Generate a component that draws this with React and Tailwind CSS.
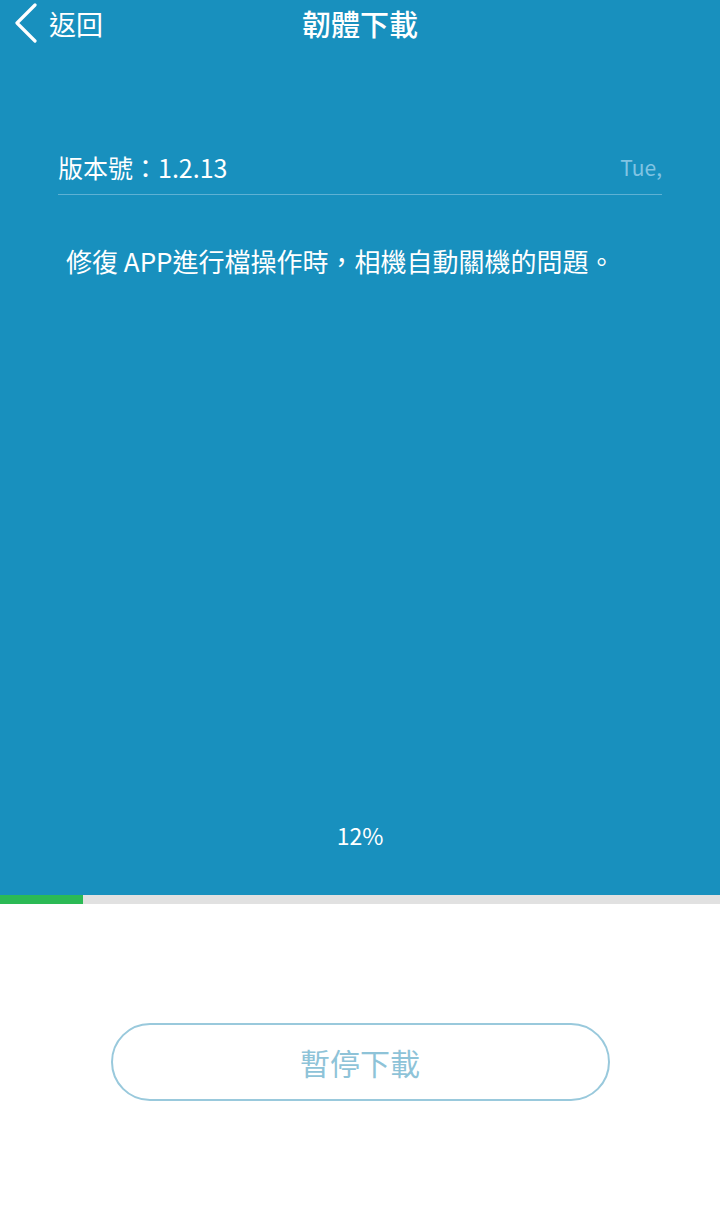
const FONT = { fontFamily: '"Noto Sans CJK TC", "Noto Sans", Roboto, sans-serif' }

function BackChevron() {
  return (
    <svg width="24" height="40" viewBox="0 0 24 40" fill="none" className="shrink-0">
      <polyline points="21,2 3,20 21,38" stroke="white" strokeWidth="3.2" strokeLinecap="round" strokeLinejoin="round" />
    </svg>
  )
}

export default function App() {
  const progress = 12

  return (
    <div className="flex h-[1228px] w-[720px] flex-col bg-white" style={FONT}>
      {/* Blue panel */}
      <div className="flex h-[895px] flex-col bg-[#1890be] text-white">
        {/* Header */}
        <div className="relative flex h-[46px] items-center justify-center">
          <button className="absolute left-[14px] top-0 flex h-[46px] items-center gap-[11px] text-[27px] leading-none">
            <BackChevron />
            <span>返回</span>
          </button>
          <h1 className="text-[29px] font-medium leading-none">韌體下載</h1>
        </div>

        {/* Version row */}
        <div className="mx-[58px] mt-[103px] flex items-end justify-between border-b border-[#5eb1d4] pb-[9px]">
          <span className="text-[25px] leading-[36px]">版本號：1.2.13</span>
          <span className="text-[21px] leading-[36px] text-[#80c4e3]">Tue,</span>
        </div>

        {/* Notes */}
        <p className="ml-[66px] mt-[47px] text-[26px] leading-[38px]">
          修復 APP進行檔操作時，相機自動關機的問題。
        </p>

        <div className="flex-1" />

        <p className="mb-[44px] text-center text-[23px] leading-[32px]">{progress}%</p>
      </div>

      {/* Progress bar */}
      <div className="h-[9px] w-full bg-[#e1e1e1]">
        <div className="h-full bg-[#2bba55]" style={{ width: '83px' }} />
      </div>

      {/* Pause button */}
      <div className="flex justify-center pt-[119px]">
        <button className="flex h-[78px] w-[499px] items-center justify-center rounded-full border-2 border-[#99c9dc] text-[30px] leading-none text-[#8ec3d8]">
          暫停下載
        </button>
      </div>
    </div>
  )
}
